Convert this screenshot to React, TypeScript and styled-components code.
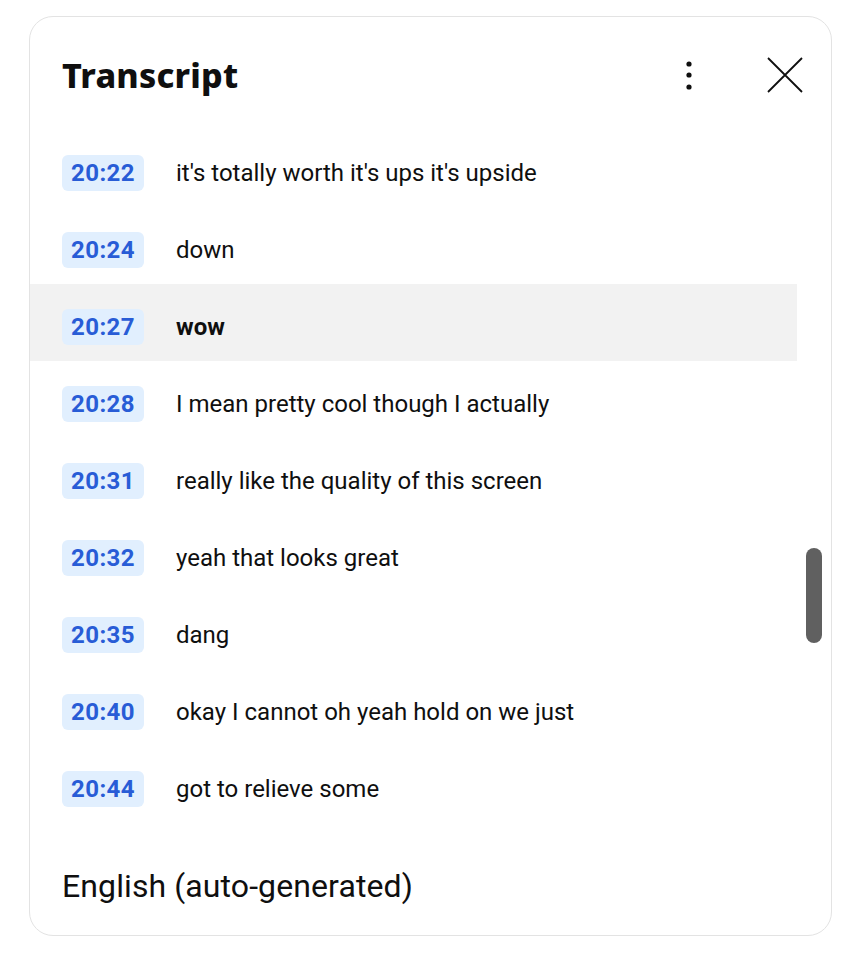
import { FC } from "react";
import styled, { createGlobalStyle } from "styled-components";

const GlobalStyle = createGlobalStyle`
  html, body {
    margin: 0;
    padding: 0;
    background: #ffffff;
  }
  * {
    box-sizing: border-box;
  }
`;

const Page = styled.div`
  width: 864px;
  height: 958px;
  padding: 16px 0 0 29px;
  background: #ffffff;
`;

const Card = styled.div`
  display: flex;
  flex-direction: column;
  width: 803px;
  height: 920px;
  border: 1px solid #e3e3e3;
  border-radius: 24px;
  overflow: hidden;
  background: #ffffff;
  position: relative;
`;

const Header = styled.div`
  display: flex;
  align-items: center;
  height: 113px;
  padding: 3px 26px 0 32px;
  flex-shrink: 0;
`;

const Title = styled.h1`
  flex: 1;
  margin: 0;
  font-family: "Noto Sans", "DejaVu Sans", sans-serif;
  font-size: 34px;
  font-weight: 800;
  color: #0f0f0f;
  letter-spacing: 0.2px;
`;

const IconButton = styled.button<{ $gap?: number }>`
  display: flex;
  align-items: center;
  justify-content: center;
  width: 40px;
  height: 40px;
  padding: 0;
  margin-left: ${(p) => p.$gap ?? 0}px;
  border: none;
  background: transparent;
  cursor: pointer;
`;

const List = styled.div`
  position: relative;
  height: 693px;
  flex-shrink: 0;
  padding-right: 34px;
`;

const Row = styled.div<{ $active?: boolean }>`
  display: flex;
  align-items: center;
  height: 77px;
  padding: 8px 0 0 32px;
  background: ${(p) => (p.$active ? "#f2f2f2" : "transparent")};
`;

const Stamp = styled.span`
  display: inline-flex;
  align-items: center;
  justify-content: center;
  width: 82px;
  height: 36px;
  border-radius: 6px;
  background: #e1effe;
  color: #285cd6;
  font-family: Roboto, "Liberation Sans", sans-serif;
  font-size: 24px;
  font-weight: 700;
  letter-spacing: 0.4px;
`;

const Line = styled.span<{ $active?: boolean }>`
  margin-left: 32px;
  font-family: Roboto, "Liberation Sans", sans-serif;
  font-size: 24px;
  font-weight: ${(p) => (p.$active ? 700 : 400)};
  color: #0f0f0f;
`;

const Thumb = styled.div`
  position: absolute;
  top: 418px;
  right: 9px;
  width: 16px;
  height: 95px;
  border-radius: 8px;
  background: #606060;
`;

const Footer = styled.div`
  display: flex;
  align-items: center;
  flex: 1;
  padding: 14px 32px 0;
  font-family: Roboto, "Liberation Sans", sans-serif;
  font-size: 32px;
  font-weight: 400;
  color: #0f0f0f;
  letter-spacing: 0.1px;
`;

const rows = [
  { time: "20:22", text: "it's totally worth it's ups it's upside" },
  { time: "20:24", text: "down" },
  { time: "20:27", text: "wow", active: true },
  { time: "20:28", text: "I mean pretty cool though I actually" },
  { time: "20:31", text: "really like the quality of this screen" },
  { time: "20:32", text: "yeah that looks great" },
  { time: "20:35", text: "dang" },
  { time: "20:40", text: "okay I cannot oh yeah hold on we just" },
  { time: "20:44", text: "got to relieve some" },
];

const App: FC = () => {
  return (
    <Page>
      <GlobalStyle />
      <Card>
        <Header>
          <Title>Transcript</Title>
          <IconButton aria-label="More actions">
            <svg width="8" height="30" viewBox="0 0 8 30">
              <circle cx="4" cy="4" r="2.6" fill="#0f0f0f" />
              <circle cx="4" cy="15" r="2.6" fill="#0f0f0f" />
              <circle cx="4" cy="27" r="2.6" fill="#0f0f0f" />
            </svg>
          </IconButton>
          <IconButton aria-label="Close" $gap={56}>
            <svg width="36" height="36" viewBox="0 0 36 36">
              <path d="M1 1 L35 35 M35 1 L1 35" stroke="#0f0f0f" strokeWidth="1.8" />
            </svg>
          </IconButton>
        </Header>
        <List>
          {rows.map((r) => (
            <Row key={r.time} $active={r.active}>
              <Stamp>{r.time}</Stamp>
              <Line $active={r.active}>{r.text}</Line>
            </Row>
          ))}
          <Thumb />
        </List>
        <Footer>English (auto-generated)</Footer>
      </Card>
    </Page>
  );
};

export default App;
